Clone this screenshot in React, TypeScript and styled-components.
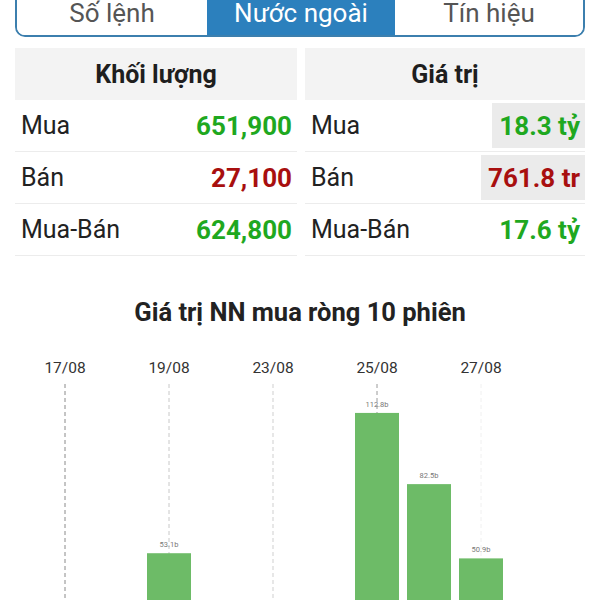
import { styled, createGlobalStyle } from 'styled-components'

const GlobalStyle = createGlobalStyle`
    html, body {
        margin: 0;
        padding: 0;
        background: #fff;
        overflow: hidden;
        font-family: Roboto, "Noto Sans", "Liberation Sans", sans-serif;
    }
`

const Page = styled.div`
    width: 600px;
    height: 600px;
    overflow: hidden;
    padding: 0 15px;
    box-sizing: border-box;
`

const TabBar = styled.div`
    margin-top: -11px;
    height: 48px;
    box-sizing: border-box;
    border: 2px solid #3c7fae;
    border-radius: 10px;
    overflow: hidden;
    display: grid;
    grid-template-columns: 190px 188px 1fr;
`

const Tab = styled.div<{ $active?: boolean }>`
    display: flex;
    align-items: center;
    justify-content: center;
    font-size: 26px;
    color: ${p => (p.$active ? '#fff' : '#555')};
    background: ${p => (p.$active ? '#2c80bd' : '#fff')};
`

const Stats = styled.div`
    margin-top: 11px;
    display: grid;
    grid-template-columns: 282px 1fr;
    column-gap: 8px;
`

const Column = styled.div`
    display: flex;
    flex-direction: column;
`

const HeaderCell = styled.div`
    height: 52px;
    background: #f3f3f3;
    display: flex;
    align-items: center;
    justify-content: center;
    font-size: 25px;
    font-weight: 700;
    color: #1e1e1e;
`

const Row = styled.div`
    height: 52px;
    box-sizing: border-box;
    border-bottom: 1px solid #ececec;
    display: flex;
    align-items: center;
    justify-content: space-between;
    padding-left: 6px;
`

const Label = styled.span`
    font-size: 25px;
    color: #222;
`

const Value = styled.span<{ $tone: 'up' | 'down'; $flash?: boolean }>`
    height: 45px;
    display: flex;
    align-items: center;
    padding: 0 5px 0 7px;
    font-size: 26px;
    font-weight: 700;
    color: ${p => (p.$tone === 'up' ? '#1fa81f' : '#a80f0f')};
    background: ${p => (p.$flash ? '#ebebeb' : 'transparent')};
`

const ChartTitle = styled.div`
    margin-top: 41px;
    text-align: center;
    font-size: 25.5px;
    font-weight: 700;
    color: #222;
    line-height: 30px;
`

const ChartBox = styled.div`
    margin: 12px -15px 0;
`

type Stat = { label: string; value: string; tone: 'up' | 'down'; flash?: boolean }

const volume: Stat[] = [
    { label: 'Mua', value: '651,900', tone: 'up' },
    { label: 'Bán', value: '27,100', tone: 'down' },
    { label: 'Mua-Bán', value: '624,800', tone: 'up' },
]

const amount: Stat[] = [
    { label: 'Mua', value: '18.3 tỷ', tone: 'up', flash: true },
    { label: 'Bán', value: '761.8 tr', tone: 'down', flash: true },
    { label: 'Mua-Bán', value: '17.6 tỷ', tone: 'up' },
]

const sessions = [
    { date: '17/08', v: -20 },
    { date: '18/08', v: -12 },
    { date: '19/08', v: 53.1 },
    { date: '20/08', v: -8 },
    { date: '23/08', v: -15 },
    { date: '24/08', v: -30 },
    { date: '25/08', v: 112.8 },
    { date: '26/08', v: 82.5 },
    { date: '27/08', v: 50.9 },
    { date: '30/08', v: -5 },
]

const gridTones: Record<string, string> = {
    '17/08': '#8a8a8a',
    '19/08': '#c8c8c8',
    '23/08': '#cfcfcf',
    '25/08': '#9a9a9a',
    '27/08': '#f0f0f0',
}

function Chart() {
    const zero = 339
    const scale = 2.35
    const step = 52
    const first = 65
    const barW = 44

    return (
        <svg width="600" height="340" viewBox="0 0 600 340">
            {sessions.map((s, i) =>
                i % 2 === 0 ? (
                    <g key={s.date}>
                        <text x={first + i * step} y={34} textAnchor="middle" fontSize="15.5" fill="#333" fontFamily="Roboto, sans-serif">
                            {s.date}
                        </text>
                        <line x1={first + i * step} y1={45} x2={first + i * step} y2={340} stroke={gridTones[s.date]} strokeWidth="1" strokeDasharray="4 3" />
                    </g>
                ) : null
            )}
            {sessions.map((s, i) => {
                const cx = first + i * step
                const h = Math.abs(s.v) * scale
                const top = s.v >= 0 ? zero - h : zero
                return (
                    <g key={'b' + s.date}>
                        <rect x={cx - barW / 2} y={top} width={barW} height={h} fill={s.v >= 0 ? '#6dbb67' : '#e06666'} />
                        {s.v > 0 && (
                            <text x={cx} y={top - 6} textAnchor="middle" fontSize="7.5" fill="#777" fontFamily="Roboto, sans-serif">
                                {s.v.toFixed(1)}b
                            </text>
                        )}
                    </g>
                )
            })}
        </svg>
    )
}

function StatColumn({ title, rows }: { title: string; rows: Stat[] }) {
    return (
        <Column>
            <HeaderCell>{title}</HeaderCell>
            {rows.map(r => (
                <Row key={r.label}>
                    <Label>{r.label}</Label>
                    <Value $tone={r.tone} $flash={r.flash}>{r.value}</Value>
                </Row>
            ))}
        </Column>
    )
}

export default function App() {
    return (
        <>
            <GlobalStyle />
            <Page>
                <TabBar>
                    <Tab>Số lệnh</Tab>
                    <Tab $active>Nước ngoài</Tab>
                    <Tab>Tín hiệu</Tab>
                </TabBar>
                <Stats>
                    <StatColumn title="Khối lượng" rows={volume} />
                    <StatColumn title="Giá trị" rows={amount} />
                </Stats>
                <ChartTitle>Giá trị NN mua ròng 10 phiên</ChartTitle>
                <ChartBox>
                    <Chart />
                </ChartBox>
            </Page>
        </>
    )
}
